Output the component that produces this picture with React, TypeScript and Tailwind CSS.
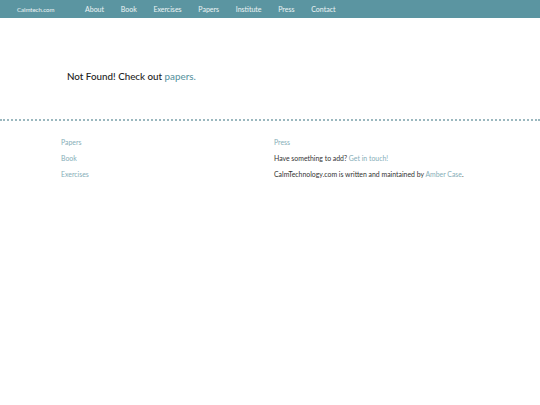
import React from "react";

export default function App() {
  const nav = ["About", "Book", "Exercises", "Papers", "Institute", "Press", "Contact"];
  return (
    <div className="min-h-[405px] w-[540px] bg-white" style={{ fontFamily: "Lato, 'Noto Sans', sans-serif" }}>
      <header className="flex h-[18px] items-center bg-[#5b95a1] text-[7px] text-white/90">
        <span className="ml-[17px] w-[68px] text-[6px]">Calmtech.com</span>
        <nav className="flex gap-[16.7px]">
          {nav.map((n) => (
            <span key={n}>{n}</span>
          ))}
        </nav>
      </header>
      <main className="h-[101px] pl-[67px] pt-[52px]">
        <p className="text-[9.8px] leading-[12px] font-medium text-[#222]">
          Not Found! Check out <span className="text-[#5b95a1]">papers.</span>
        </p>
      </main>
      <div className="h-0 border-t-2 border-dotted border-[#9bb8bf]" />
      <footer className="flex pt-[16px] text-[6.9px]">
        <div className="ml-[61px] flex w-[213px] flex-col gap-[6px] text-[#86aeb8]">
          <span className="leading-[10px]">Papers</span>
          <span className="leading-[10px]">Book</span>
          <span className="leading-[10px]">Exercises</span>
        </div>
        <div className="flex flex-col gap-[6px] text-[#333]">
          <span className="leading-[10px] text-[#86aeb8]">Press</span>
          <span className="leading-[10px]">
            Have something to add? <span className="text-[#86aeb8]">Get in touch!</span>
          </span>
          <span className="leading-[10px]">
            CalmTechnology.com is written and maintained by <span className="text-[#86aeb8]">Amber Case</span>.
          </span>
        </div>
      </footer>
    </div>
  );
}
